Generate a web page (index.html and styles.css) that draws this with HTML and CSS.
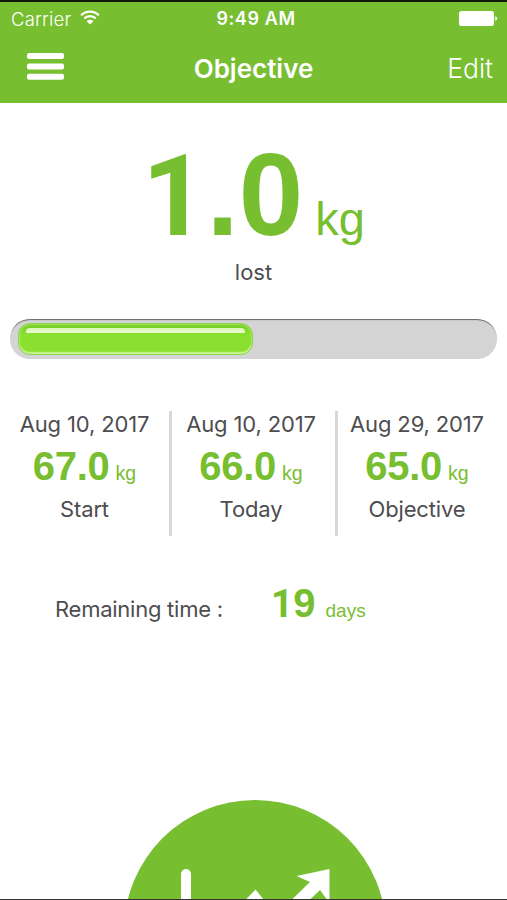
FILE: index.html
```html
<!DOCTYPE html>
<html lang="en">
<head>
    <meta charset="UTF-8">
    <meta name="viewport" content="width=device-width, initial-scale=1.0">
    <title>Objective</title>
    <link rel="stylesheet" href="styles.css">
</head>
<body>
    <div class="screen">
        <header class="header">
            <!-- Status bar -->
            <div class="status">
                <div class="network">
                    <span class="carrier">Carrier</span>
                    <svg class="wifi" width="20" height="15" viewBox="0 0 20 15">
                        <path d="M1.2 5.2a12.6 12.6 0 0 1 17.6 0M4.3 8.4a8.2 8.2 0 0 1 11.4 0" fill="none" stroke="#fff" stroke-width="2.3"/>
                        <path d="M10 14.6L6.6 11.2a4.9 4.9 0 0 1 6.8 0z" fill="#fff"/>
                    </svg>
                </div>
                <span class="clock">9:49 AM</span>
                <svg class="battery" width="39" height="15" viewBox="0 0 39 15">
                    <rect x="0" y="0" width="35" height="15" rx="2.5" fill="#fff"/>
                    <path d="M36.3 5a2.6 2.6 0 0 1 0 5z" fill="#fff"/>
                </svg>
            </div>
            <!-- Navigation bar -->
            <div class="nav">
                <svg class="menu" width="37" height="27" viewBox="0 0 37 27">
                    <rect width="37" height="6" rx="2" fill="#fff"/>
                    <rect y="10.4" width="37" height="6" rx="2" fill="#fff"/>
                    <rect y="20.8" width="37" height="6" rx="2" fill="#fff"/>
                </svg>
                <h1 class="title">Objective</h1>
                <span class="edit">Edit</span>
            </div>
        </header>

        <main class="content">
            <div class="total">
                <strong class="total-value"><span class="one">1</span>.0</strong>
                <span class="total-unit">kg</span>
            </div>
            <p class="lost">lost</p>

            <!-- Progress bar -->
            <div class="progress">
                <div class="progress-fill">
                    <div class="shine"></div>
                </div>
            </div>

            <div class="steps">
                <div class="step">
                    <p class="label">Aug 10, 2017</p>
                    <p class="weight"><strong>67.0</strong><span>kg</span></p>
                    <p class="label name">Start</p>
                </div>
                <div class="step">
                    <p class="label">Aug 10, 2017</p>
                    <p class="weight"><strong>66.0</strong><span>kg</span></p>
                    <p class="label name">Today</p>
                </div>
                <div class="step">
                    <p class="label">Aug 29, 2017</p>
                    <p class="weight"><strong>65.0</strong><span>kg</span></p>
                    <p class="label name">Objective</p>
                </div>
            </div>

            <div class="remaining">
                <span class="label">Remaining time :</span>
                <strong class="days-value"><span class="one">1</span>9</strong>
                <span class="days-unit">days</span>
            </div>

            <!-- Chart button, cut by the bottom of the screen -->
            <div class="chart-button">
                <svg width="264" height="264" viewBox="0 0 264 264">
                    <circle cx="132" cy="131" r="131" fill="#78be31"/>
                    <path d="M63 74V190H205" fill="none" stroke="#fff" stroke-width="10" stroke-linecap="round" stroke-linejoin="round"/>
                    <path d="M206.500 69L173.500 76L187 82L153 115L132.500 89.500L82 142L92 152L132 109L153 132L197 90L206.500 103Z" fill="#fff"/>
                </svg>
            </div>
        </main>
    </div>
</body>
</html>
```
FILE: styles.css
```css
*{
    margin: 0;
    padding: 0;
    box-sizing: border-box;
}
body{
    background-color: white;
    font-family: Inter, "Liberation Sans", sans-serif;
    color: #4d4d4f;
}
.screen{
    width: 507px;
    height: 900px;
    overflow: hidden;
    border-top: 2px solid #101808;
    border-bottom: 1px solid #333;
    display: flex;
    flex-direction: column;
}
/* Green header */
.header{
    height: 101px;
    flex-shrink: 0;
    background-color: #78be31;
    color: white;
}
.status, .nav{
    display: grid;
    grid-template-columns: 1fr auto 1fr;
    align-items: center;
}
.status{
    height: 33px;
    padding: 0 9px 0 11px;
}
.network{
    display: flex;
    align-items: center;
    gap: 9px;
}
.network .wifi{
    margin-bottom: 2px;
}
.carrier{
    font-size: 18.5px;
    font-weight: 300;
    letter-spacing: 0.2px;
}
.clock{
    padding-left: 3px;
    font-size: 18px;
    font-weight: 600;
    letter-spacing: 0.6px;
}
.battery{
    justify-self: end;
}
.nav{
    height: 66px;
    padding: 0 14px 0 14px;
}
.menu{
    margin: 0 0 3px 13px;
}
.title{
    font-size: 26px;
    font-weight: 600;
}
.edit{
    justify-self: end;
    font-size: 26.5px;
    font-weight: 300;
}
/* Weight lost so far */
.content{
    flex: 1;
    min-height: 0;
}
.total{
    display: flex;
    justify-content: center;
    align-items: baseline;
    gap: 12px;
    height: 155px;
    padding-top: 26px;
    color: #78be31;
    font-family: "Liberation Sans", Arial, sans-serif;
}
.total-value{
    font-size: 116px;
    line-height: 132px;
}
.total-unit{
    font-size: 47px;
}
/* Digit one without a foot */
.one{
    font-family: Roboto, sans-serif;
    font-size: 0.97em;
}
.lost{
    text-align: center;
    font-size: 22px;
    line-height: 28px;
}
/* Progress bar */
.progress{
    height: 40px;
    margin: 33px 10px 0;
    padding: 4px 8px;
    border-radius: 20px;
    background-color: #d4d4d4;
    box-shadow: inset 0 2px 1px -1px #666;
}
.progress-fill{
    width: 235px;
    height: 32px;
    padding: 4px 7px;
    border-radius: 12px;
    background: linear-gradient(#6fcb22, #8be02f 35%, #8be02f);
    border: 1px solid #8fd653;
    box-shadow: inset 0 -2px 1px #c7f394, inset 0 0 2px 1px #a5e65f;
}
.shine{
    height: 5px;
    border-radius: 4px 4px 1px 1px;
    background: linear-gradient(#d9f8b5, #e9fbd2);
}
/* Start, today and objective columns */
.steps{
    display: flex;
    margin-top: 52px;
    height: 125px;
}
.step{
    width: 166px;
    padding-right: 8px;
    text-align: center;
}
.step:first-child{
    width: 172px;
    padding-right: 0;
}
.step:not(:last-child){
    border-right: 3px solid #d8d8d8;
}
.step:nth-child(2){
    padding-right: 5px;
}
.label{
    font-size: 22px;
    line-height: 27px;
    letter-spacing: -0.15px;
    white-space: nowrap;
}
.weight{
    display: flex;
    justify-content: center;
    align-items: baseline;
    gap: 6px;
    height: 58px;
    line-height: 56px;
    color: #78be31;
    font-family: "Liberation Sans", Arial, sans-serif;
}
.weight strong{
    font-size: 40px;
    letter-spacing: -0.3px;
}
.weight span{
    font-size: 19.5px;
}
/* Time left */
.remaining{
    display: flex;
    align-items: baseline;
    margin-top: 44px;
    padding-left: 55px;
    line-height: 46px;
}
.remaining .label{
    width: 168px;
    letter-spacing: -0.25px;
}
.days-value{
    margin-left: 48px;
    color: #78be31;
    font-family: "Liberation Sans", Arial, sans-serif;
    font-size: 40px;
}
.days-unit{
    margin-left: 10px;
    color: #78be31;
    font-family: "Liberation Sans", Arial, sans-serif;
    font-size: 19px;
}
.chart-button{
    margin: 166px 0 0 123px;
}
```
